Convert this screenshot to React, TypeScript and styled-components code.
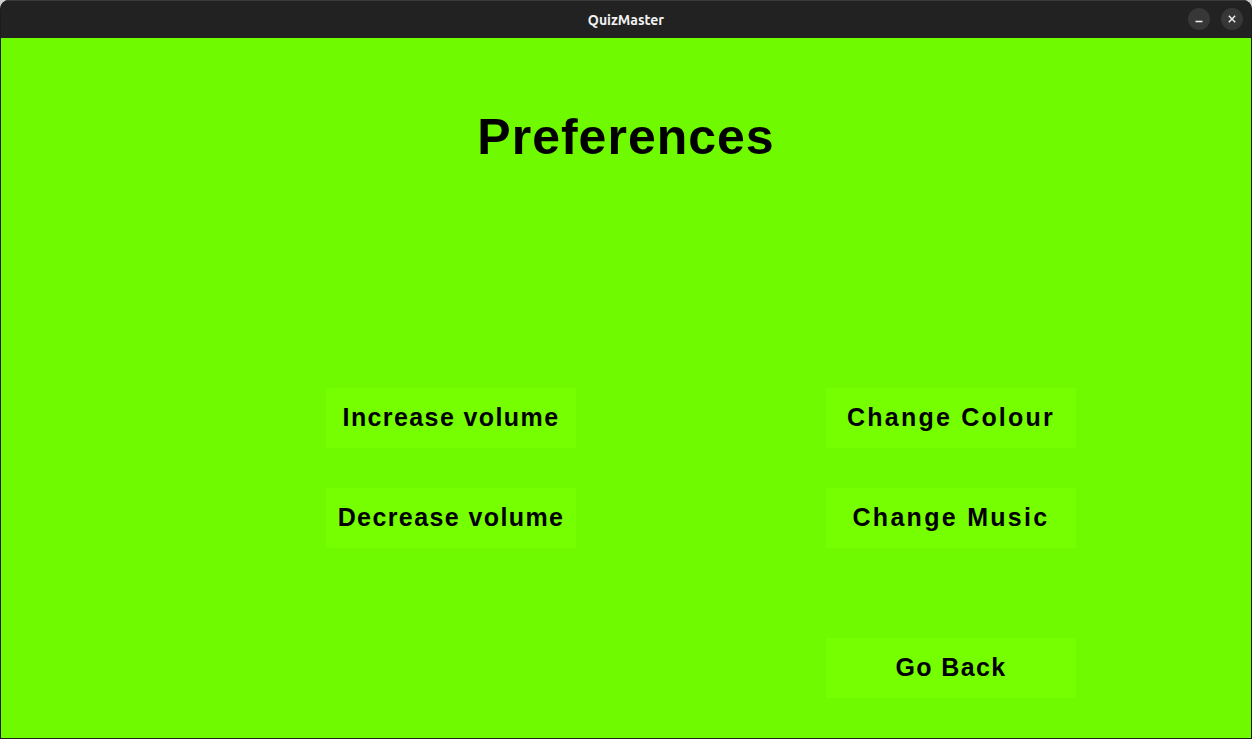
import React from "react";
import styled, { createGlobalStyle } from "styled-components";

const GlobalStyle = createGlobalStyle`
  html, body {
    margin: 0;
    padding: 0;
    background: #d0d0d0;
  }
  * {
    box-sizing: border-box;
  }
`;

const buttons = [
  { label: "Increase volume", col: 1, spacing: 1.4 },
  { label: "Change Colour", col: 2, spacing: 2.2 },
  { label: "Decrease volume", col: 1, spacing: 1.4 },
  { label: "Change Music", col: 2, spacing: 2.3 },
];

const App = () => {
  return (
    <>
      <GlobalStyle />
      <Window>
        <TitleBar>
          <span className="title">QuizMaster</span>
          <div className="controls">
            <WinButton aria-label="minimise">
              <svg width="10" height="10" viewBox="0 0 10 10">
                <path d="M1.5 7.5h7" stroke="#f0f0f0" strokeWidth="1.3" />
              </svg>
            </WinButton>
            <WinButton aria-label="close">
              <svg width="10" height="10" viewBox="0 0 10 10">
                <path
                  d="M1.8 1.8l6.4 6.4M8.2 1.8l-6.4 6.4"
                  stroke="#f0f0f0"
                  strokeWidth="1.4"
                />
              </svg>
            </WinButton>
          </div>
        </TitleBar>
        <Content>
          <Title>Preferences</Title>
          <ButtonGrid>
            {buttons.map((b) => (
              <MenuButton key={b.label} $col={b.col} $spacing={b.spacing}>
                {b.label}
              </MenuButton>
            ))}
            <MenuButton $col={2} $spacing={1.35} $offset={50}>
              Go Back
            </MenuButton>
          </ButtonGrid>
        </Content>
      </Window>
    </>
  );
};

export default App;

const Window = styled.div`
  width: 1252px;
  height: 739px;
  display: flex;
  flex-direction: column;
  background: #1c1c1c;
  border-radius: 9px 9px 0 0;
  overflow: hidden;
  padding: 0 1px 1px 1px;
`;

const TitleBar = styled.div`
  height: 38px;
  flex: none;
  display: flex;
  align-items: center;
  justify-content: center;
  position: relative;
  background: #222222;
  border-top: 1px solid #3a3a3a;

  .title {
    font-family: "Ubuntu", "Noto Sans", "DejaVu Sans", sans-serif;
    font-weight: 700;
    font-size: 14px;
    color: #f2f2f2;
  }

  .controls {
    position: absolute;
    right: 8px;
    top: 7px;
    display: flex;
    gap: 11px;
  }
`;

const WinButton = styled.div`
  width: 22px;
  height: 22px;
  border-radius: 50%;
  background: #373737;
  display: flex;
  align-items: center;
  justify-content: center;
`;

const Content = styled.div`
  flex: 1;
  background: #6ffa00;
  display: flex;
  flex-direction: column;
  font-family: "Liberation Sans", Arial, sans-serif;
  color: #000;
`;

const Title = styled.h1`
  margin: 64px 0 0 0;
  text-align: center;
  font-size: 50px;
  line-height: 70px;
  font-weight: 700;
  letter-spacing: 1px;
`;

const ButtonGrid = styled.div`
  margin-top: 216px;
  padding-left: 325px;
  display: grid;
  grid-template-columns: 250px 250px;
  column-gap: 250px;
  row-gap: 40px;
  grid-auto-rows: 60px;
`;

const MenuButton = styled.div<{
  $col: number;
  $spacing: number;
  $offset?: number;
}>`
  grid-column: ${(p) => p.$col};
  margin-top: ${(p) => p.$offset ?? 0}px;
  height: 60px;
  padding-bottom: 2px;
  background: #75ff00;
  display: flex;
  align-items: center;
  justify-content: center;
  font-size: 25px;
  font-weight: 700;
  letter-spacing: ${(p) => p.$spacing}px;
`;
